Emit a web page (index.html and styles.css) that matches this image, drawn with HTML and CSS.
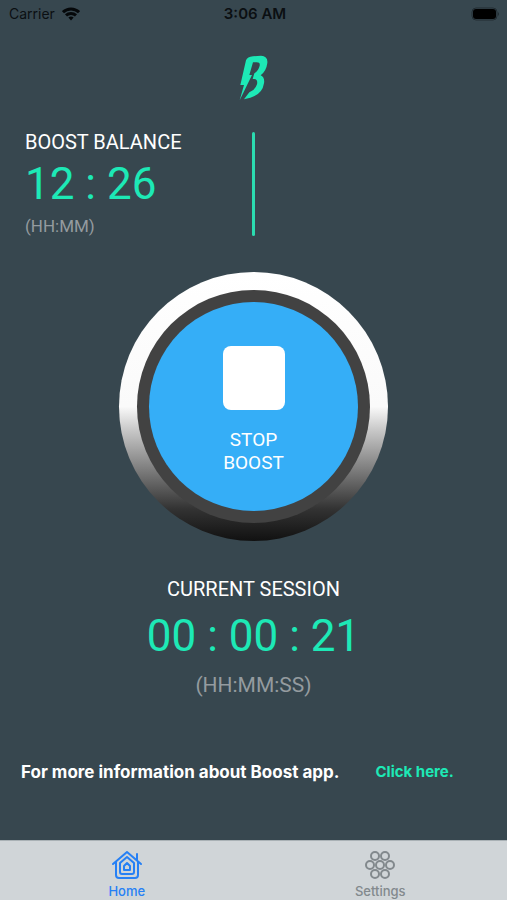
FILE: index.html
```html
<!DOCTYPE html>
<html lang="en">
<head>
<meta charset="utf-8">
<meta name="viewport" content="width=device-width, initial-scale=1">
<title>Boost</title>
<link rel="stylesheet" href="styles.css">
</head>
<body>
<header class="status">
  <div class="carrier">
    <span>Carrier</span>
    <svg class="wifi" viewBox="0 0 18 14" aria-hidden="true">
      <path d="M1 5.2a11.6 11.6 0 0 1 16 0" />
      <path d="M4 8.4a7.3 7.3 0 0 1 10 0" />
      <path class="dot" d="M6.4 10.6a4 4 0 0 1 5.2 0L9 13.4z" />
    </svg>
  </div>
  <time class="clock">3:06 AM</time>
  <svg class="battery" viewBox="0 0 30 14" aria-hidden="true">
    <rect class="case" x="1" y="1" width="25" height="12" rx="4" />
    <rect x="2" y="2" width="23" height="10" rx="3" />
    <path class="tip" d="M27 5q2 2 0 4z" />
  </svg>
</header>
<main class="home">
  <svg class="logo" viewBox="42 30 90 138" role="img" aria-label="Boost">
    <path d="M63 46Q67 36 84 34L108 32Q129 33 127 54Q124 78 107 91Q120 97 117 115Q112 148 76 158L57 163L73 142Q91 134 96 118Q99 103 88 102L83 102L88 85Q100 78 104 62Q106 52 95 52H84L73 90H81L44 166L57 120L46 120Z" />
  </svg>
  <section class="balance">
    <div class="balance-text">
      <h1 class="heading">BOOST BALANCE</h1>
      <p class="timer">12 : 26</p>
      <p class="unit">(HH:MM)</p>
    </div>
    <div class="divider"></div>
  </section>
  <button class="boost" type="button">
    <span class="bezel">
      <span class="face">
        <span class="stop"></span>
        <span>STOP<br>BOOST</span>
      </span>
    </span>
  </button>
  <section class="session">
    <h2 class="heading">CURRENT SESSION</h2>
    <p class="timer">00 : 00 : 21</p>
    <p class="unit unit-large">(HH:MM:SS)</p>
  </section>
  <p class="info">
    <span>For more information about Boost app.</span>
    <a href="#info">Click here.</a>
  </p>
</main>
<nav class="tabs">
  <a class="tab active" href="#home">
    <svg viewBox="0 0 32 30" aria-hidden="true">
      <path d="M2 14L16 2L30 14M26 10V4V10" />
      <path d="M5 12V25q0 3 3 3H24q3 0 3-3V12" />
      <path d="M9 13L16 7L23 13V22q0 2-2 2H11q-2 0-2-2z" />
      <path d="M13 16L16 13L19 16V20H13z" />
    </svg>
    <span>Home</span>
  </a>
  <a class="tab" href="#settings">
    <svg viewBox="0 0 32 30" aria-hidden="true">
      <circle cx="11" cy="6" r="4" /><circle cx="21" cy="6" r="4" />
      <circle cx="6" cy="15" r="4" /><circle cx="16" cy="15" r="4" /><circle cx="26" cy="15" r="4" />
      <circle cx="11" cy="24" r="4" /><circle cx="21" cy="24" r="4" />
    </svg>
    <span>Settings</span>
  </a>
</nav>
</body>
</html>
```
FILE: styles.css
```css
* { box-sizing: border-box; }

body {
  margin: 0;
  min-height: 100vh;
  display: flex;
  flex-direction: column;
  background: #37474f;
  color: #fff;
  font-family: Roboto, sans-serif;
}

h1, h2, p { margin: 0; }

.status {
  display: grid;
  grid-template-columns: 1fr auto 1fr;
  align-items: center;
  height: 28px;
  padding: 0 6px 0 9px;
  color: #0b0f12;
  font: 14px/20px Inter, sans-serif;
}

.carrier { display: flex; align-items: center; gap: 7px; }
.wifi { width: 18px; height: 14px; fill: none; stroke: #05080a; stroke-width: 3; }
.wifi .dot { fill: #05080a; stroke: none; }
.clock { font-size: 15px; font-weight: 600; }
.battery { justify-self: end; width: 30px; height: 14px; fill: #000; }
.battery .case { fill: none; stroke: #222d33; stroke-width: 1; }
.battery .tip { fill: #222d33; }

.home {
  flex: 1;
  display: flex;
  flex-direction: column;
  align-items: center;
  padding-top: 27px;
}

.logo { width: 30px; height: 46px; fill: #1de9b6; }

.balance {
  align-self: stretch;
  display: grid;
  grid-template-columns: 1fr auto 1fr;
  align-items: start;
  margin-top: 29px;
  padding: 0 25px;
}

.heading { font-size: 20px; line-height: 24px; font-weight: 400; }
.timer { color: #1de9b6; font-size: 44px; line-height: 52px; }
.balance .timer { margin-top: 4px; }
.unit { color: #949b9f; font-size: 17px; line-height: 24px; }
.balance .unit { margin-top: 4px; }
.session .unit-large { font-size: 21px; }
.divider { width: 3px; height: 104px; margin-top: 2px; border-radius: 2px; background: #2bdcb0; }

.boost {
  margin: 34px 0 0;
  padding: 18px;
  border: 0;
  border-radius: 50%;
  background: linear-gradient(#fff 0%, #fafafa 50%, #ccc 58%, #666 78%, #333 88%, #111 100%);
  color: #fff;
  font: 19px/23px Roboto, sans-serif;
}

.bezel { display: block; padding: 12px; border-radius: 50%; background: #424242; }
.face {
  display: flex;
  flex-direction: column;
  align-items: center;
  gap: 18px;
  width: 209px;
  height: 209px;
  padding-top: 44px;
  border-radius: 50%;
  background: #35aef7;
}
.stop { width: 62px; height: 64px; border-radius: 8px; background: #fff; }

.session { margin-top: 36px; text-align: center; }
.session .timer { margin-top: 9px; }
.session .unit { margin-top: 11px; }

.info {
  align-self: stretch;
  display: flex;
  align-items: center;
  gap: 36px;
  margin-top: 63px;
  padding: 0 21px;
  font: 700 17px/24px Inter, sans-serif;
}
.info a { color: #1de9b6; font-size: 15px; text-decoration: none; }

.tabs {
  display: flex;
  height: 60px;
  border-top: 1px solid #a9b1b5;
  background: #d0d5d8;
}
.tab {
  flex: 1;
  display: flex;
  flex-direction: column;
  align-items: center;
  gap: 2px;
  padding-top: 9px;
  color: #82898d;
  font: 500 13px/18px Inter, sans-serif;
  text-decoration: none;
}
.tab svg { width: 32px; height: 30px; fill: none; stroke: currentColor; stroke-width: 2; stroke-linejoin: round; stroke-linecap: round; }
.active { color: #2680f5; }
```
